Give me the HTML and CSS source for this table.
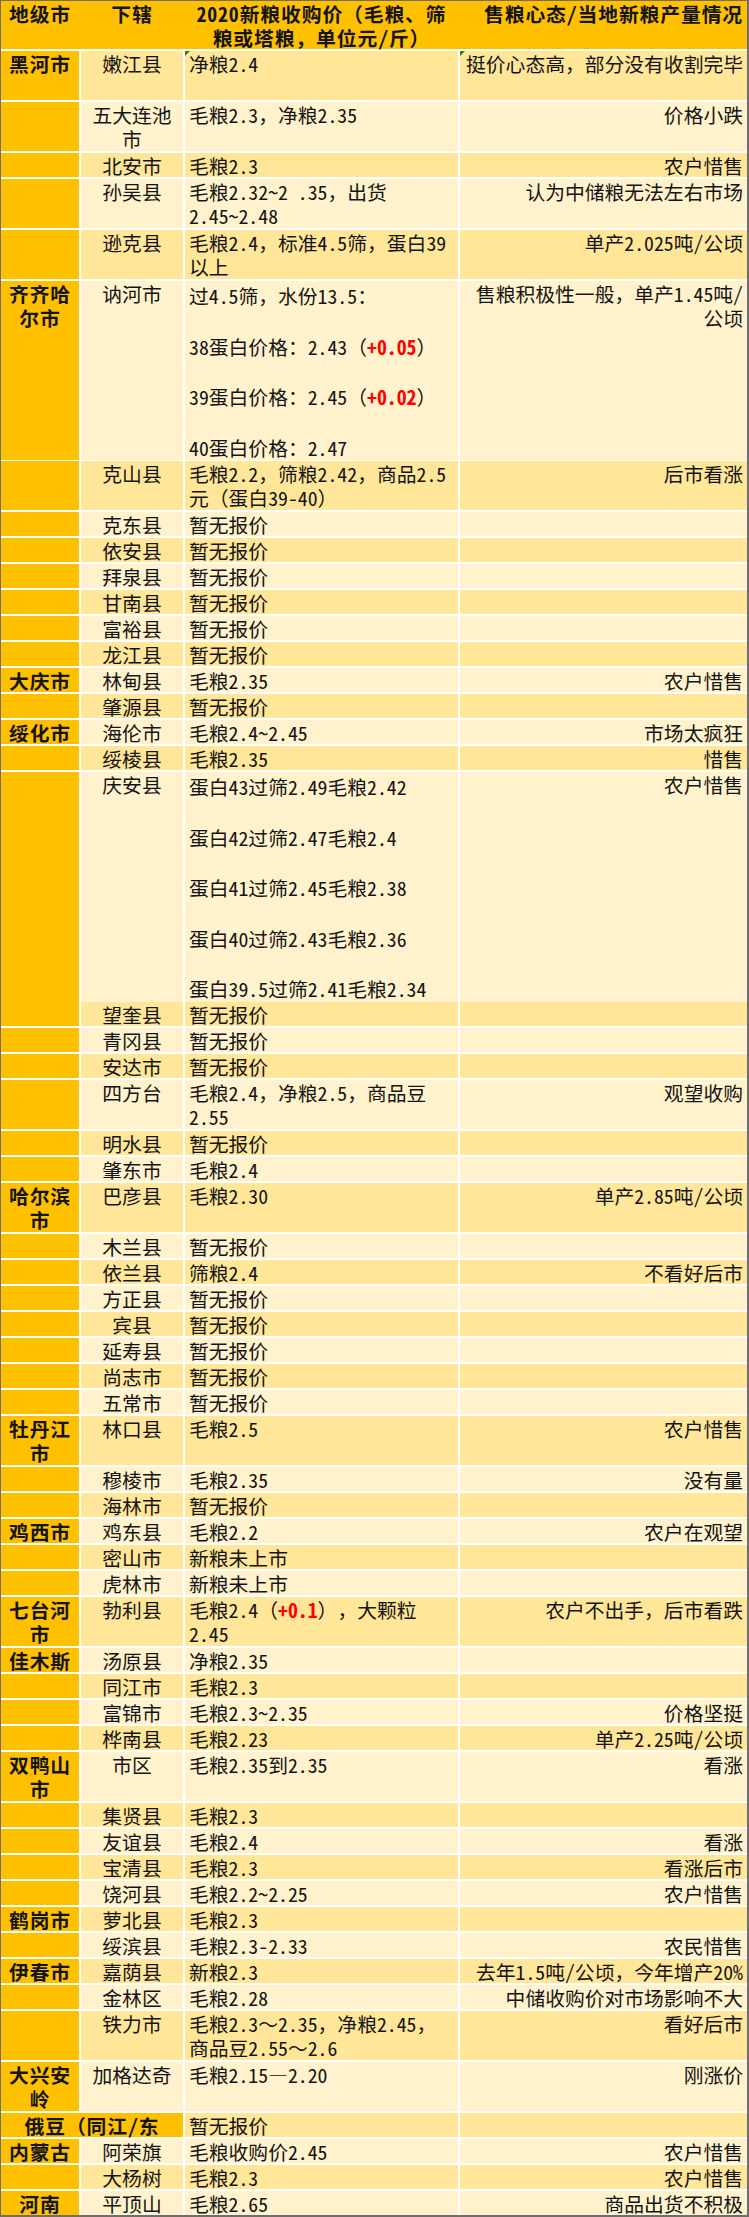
FILE: index.html
```html
<!DOCTYPE html>
<html lang="zh-CN">
<head>
<meta charset="utf-8">
<title>2020新粮收购价</title>
<link rel="stylesheet" href="styles.css">
</head>
<body>
<div class="sheet">
  <div class="row head">
    <div class="c1">地级市</div><div class="c2">下辖</div><div class="c3">2020新粮收购价（毛粮、筛粮或塔粮，单位元/斤）</div><div class="c4">售粮心态/当地新粮产量情况</div>
  </div>
  <div class="row dark h2"><div class="c1">黑河市</div><div class="c2">嫩江县</div><div class="c3 flag">净粮2.4</div><div class="c4 flag">挺价心态高，部分没有收割完毕</div></div>
  <div class="row light h2"><div class="c1"></div><div class="c2">五大连池市</div><div class="c3">毛粮2.3，净粮2.35</div><div class="c4">价格小跌</div></div>
  <div class="row dark h1"><div class="c1"></div><div class="c2">北安市</div><div class="c3">毛粮2.3</div><div class="c4">农户惜售</div></div>
  <div class="row light h2"><div class="c1"></div><div class="c2">孙吴县</div><div class="c3">毛粮2.32~2 .35，出货2.45~2.48</div><div class="c4">认为中储粮无法左右市场</div></div>
  <div class="row dark h2"><div class="c1"></div><div class="c2">逊克县</div><div class="c3">毛粮2.4，标准4.5筛，蛋白39以上</div><div class="c4">单产2.025吨/公顷</div></div>
  <div class="row light h7"><div class="c1">齐齐哈尔市</div><div class="c2">讷河市</div><div class="c3 tall">过4.5筛，水份13.5：<br><br>38蛋白价格：2.43（<b class="red">+0.05</b>）<br><br>39蛋白价格：2.45（<b class="red">+0.02</b>）<br><br>40蛋白价格：2.47</div><div class="c4">售粮积极性一般，单产1.45吨/公顷</div></div>
  <div class="row dark h2"><div class="c1"></div><div class="c2">克山县</div><div class="c3">毛粮2.2，筛粮2.42，商品2.5元（蛋白39-40）</div><div class="c4">后市看涨</div></div>
  <div class="row light h1"><div class="c1"></div><div class="c2">克东县</div><div class="c3">暂无报价</div><div class="c4"></div></div>
  <div class="row dark h1"><div class="c1"></div><div class="c2">依安县</div><div class="c3">暂无报价</div><div class="c4"></div></div>
  <div class="row light h1"><div class="c1"></div><div class="c2">拜泉县</div><div class="c3">暂无报价</div><div class="c4"></div></div>
  <div class="row dark h1"><div class="c1"></div><div class="c2">甘南县</div><div class="c3">暂无报价</div><div class="c4"></div></div>
  <div class="row light h1"><div class="c1"></div><div class="c2">富裕县</div><div class="c3">暂无报价</div><div class="c4"></div></div>
  <div class="row dark h1"><div class="c1"></div><div class="c2">龙江县</div><div class="c3">暂无报价</div><div class="c4"></div></div>
  <div class="row light h1"><div class="c1">大庆市</div><div class="c2">林甸县</div><div class="c3">毛粮2.35</div><div class="c4">农户惜售</div></div>
  <div class="row dark h1"><div class="c1"></div><div class="c2">肇源县</div><div class="c3">暂无报价</div><div class="c4"></div></div>
  <div class="row light h1"><div class="c1">绥化市</div><div class="c2">海伦市</div><div class="c3">毛粮2.4~2.45</div><div class="c4">市场太疯狂</div></div>
  <div class="row dark h1"><div class="c1"></div><div class="c2">绥棱县</div><div class="c3">毛粮2.35</div><div class="c4">惜售</div></div>
  <div class="row light h9"><div class="c1"></div><div class="c2">庆安县</div><div class="c3 tall">蛋白43过筛2.49毛粮2.42<br><br>蛋白42过筛2.47毛粮2.4<br><br>蛋白41过筛2.45毛粮2.38<br><br>蛋白40过筛2.43毛粮2.36<br><br>蛋白39.5过筛2.41毛粮2.34</div><div class="c4">农户惜售</div></div>
  <div class="row dark h1"><div class="c1"></div><div class="c2">望奎县</div><div class="c3">暂无报价</div><div class="c4"></div></div>
  <div class="row light h1"><div class="c1"></div><div class="c2">青冈县</div><div class="c3">暂无报价</div><div class="c4"></div></div>
  <div class="row dark h1"><div class="c1"></div><div class="c2">安达市</div><div class="c3">暂无报价</div><div class="c4"></div></div>
  <div class="row light h2"><div class="c1"></div><div class="c2">四方台</div><div class="c3">毛粮2.4，净粮2.5，商品豆2.55</div><div class="c4">观望收购</div></div>
  <div class="row dark h1"><div class="c1"></div><div class="c2">明水县</div><div class="c3">暂无报价</div><div class="c4"></div></div>
  <div class="row light h1"><div class="c1"></div><div class="c2">肇东市</div><div class="c3">毛粮2.4</div><div class="c4"></div></div>
  <div class="row dark h2"><div class="c1">哈尔滨市</div><div class="c2">巴彦县</div><div class="c3">毛粮2.30</div><div class="c4">单产2.85吨/公顷</div></div>
  <div class="row light h1"><div class="c1"></div><div class="c2">木兰县</div><div class="c3">暂无报价</div><div class="c4"></div></div>
  <div class="row dark h1"><div class="c1"></div><div class="c2">依兰县</div><div class="c3">筛粮2.4</div><div class="c4">不看好后市</div></div>
  <div class="row light h1"><div class="c1"></div><div class="c2">方正县</div><div class="c3">暂无报价</div><div class="c4"></div></div>
  <div class="row dark h1"><div class="c1"></div><div class="c2">宾县</div><div class="c3">暂无报价</div><div class="c4"></div></div>
  <div class="row light h1"><div class="c1"></div><div class="c2">延寿县</div><div class="c3">暂无报价</div><div class="c4"></div></div>
  <div class="row dark h1"><div class="c1"></div><div class="c2">尚志市</div><div class="c3">暂无报价</div><div class="c4"></div></div>
  <div class="row light h1"><div class="c1"></div><div class="c2">五常市</div><div class="c3">暂无报价</div><div class="c4"></div></div>
  <div class="row dark h2"><div class="c1">牡丹江市</div><div class="c2">林口县</div><div class="c3">毛粮2.5</div><div class="c4">农户惜售</div></div>
  <div class="row light h1"><div class="c1"></div><div class="c2">穆棱市</div><div class="c3">毛粮2.35</div><div class="c4">没有量</div></div>
  <div class="row dark h1"><div class="c1"></div><div class="c2">海林市</div><div class="c3">暂无报价</div><div class="c4"></div></div>
  <div class="row light h1"><div class="c1">鸡西市</div><div class="c2">鸡东县</div><div class="c3">毛粮2.2</div><div class="c4">农户在观望</div></div>
  <div class="row dark h1"><div class="c1"></div><div class="c2">密山市</div><div class="c3">新粮未上市</div><div class="c4"></div></div>
  <div class="row light h1"><div class="c1"></div><div class="c2">虎林市</div><div class="c3">新粮未上市</div><div class="c4"></div></div>
  <div class="row dark h2"><div class="c1">七台河市</div><div class="c2">勃利县</div><div class="c3">毛粮2.4（<b class="red">+0.1</b>），大颗粒2.45</div><div class="c4">农户不出手，后市看跌</div></div>
  <div class="row light h1"><div class="c1">佳木斯</div><div class="c2">汤原县</div><div class="c3">净粮2.35</div><div class="c4"></div></div>
  <div class="row dark h1"><div class="c1"></div><div class="c2">同江市</div><div class="c3">毛粮2.3</div><div class="c4"></div></div>
  <div class="row light h1"><div class="c1"></div><div class="c2">富锦市</div><div class="c3">毛粮2.3~2.35</div><div class="c4">价格坚挺</div></div>
  <div class="row dark h1"><div class="c1"></div><div class="c2">桦南县</div><div class="c3">毛粮2.23</div><div class="c4">单产2.25吨/公顷</div></div>
  <div class="row light h2"><div class="c1">双鸭山市</div><div class="c2">市区</div><div class="c3">毛粮2.35到2.35</div><div class="c4">看涨</div></div>
  <div class="row dark h1"><div class="c1"></div><div class="c2">集贤县</div><div class="c3">毛粮2.3</div><div class="c4"></div></div>
  <div class="row light h1"><div class="c1"></div><div class="c2">友谊县</div><div class="c3">毛粮2.4</div><div class="c4">看涨</div></div>
  <div class="row dark h1"><div class="c1"></div><div class="c2">宝清县</div><div class="c3">毛粮2.3</div><div class="c4">看涨后市</div></div>
  <div class="row light h1"><div class="c1"></div><div class="c2">饶河县</div><div class="c3">毛粮2.2~2.25</div><div class="c4">农户惜售</div></div>
  <div class="row dark h1"><div class="c1">鹤岗市</div><div class="c2">萝北县</div><div class="c3">毛粮2.3</div><div class="c4"></div></div>
  <div class="row light h1"><div class="c1"></div><div class="c2">绥滨县</div><div class="c3">毛粮2.3-2.33</div><div class="c4">农民惜售</div></div>
  <div class="row dark h1"><div class="c1">伊春市</div><div class="c2">嘉荫县</div><div class="c3">新粮2.3</div><div class="c4">去年1.5吨/公顷，今年增产20%</div></div>
  <div class="row light h1"><div class="c1"></div><div class="c2">金林区</div><div class="c3">毛粮2.28</div><div class="c4">中储收购价对市场影响不大</div></div>
  <div class="row dark h2"><div class="c1"></div><div class="c2">铁力市</div><div class="c3">毛粮2.3～2.35，净粮2.45，商品豆2.55～2.6</div><div class="c4">看好后市</div></div>
  <div class="row light h2"><div class="c1">大兴安岭</div><div class="c2">加格达奇</div><div class="c3">毛粮2.15—2.20</div><div class="c4">刚涨价</div></div>
  <div class="row dark h1"><div class="c1 span2">俄豆（同江/东</div><div class="c3">暂无报价</div><div class="c4"></div></div>
  <div class="row light h1"><div class="c1">内蒙古</div><div class="c2">阿荣旗</div><div class="c3">毛粮收购价2.45</div><div class="c4">农户惜售</div></div>
  <div class="row dark h1"><div class="c1"></div><div class="c2">大杨树</div><div class="c3">毛粮2.3</div><div class="c4">农户惜售</div></div>
  <div class="row light h1"><div class="c1">河南</div><div class="c2">平顶山</div><div class="c3">毛粮2.65</div><div class="c4">商品出货不积极</div></div>
</div>
</body>
</html>
```

FILE: styles.css
```css
* { box-sizing: border-box; }
html, body { margin: 0; padding: 0; }
body {
  background: #6e6e6e;
  font-family: "Noto Sans Mono CJK SC", "Noto Sans CJK SC", sans-serif;
  font-size: 19.8px;
  color: #141414;
  text-spacing-trim: space-all;
}
.sheet {
  width: 746px;
  margin: 1px 0 0 1px;
  background: #ffffff;
  display: flex;
  flex-direction: column;
  gap: 2px;
}
.row {
  display: grid;
  grid-template-columns: 78px 102px 273px 287px;
  column-gap: 2px;
  line-height: 24px;
}
.row > div {
  padding: 1px 4px 0 4px;
  overflow: visible;
  min-width: 0;
}
.head {
  height: 48px;
  background: #ffc000;
  font-weight: 700;
  line-height: 24px;
  letter-spacing: 0.9px;
}
.head > div { background: transparent; }
.c1 { background: #ffc000; text-align: center; font-weight: 700; letter-spacing: 0.9px; }
.c2 { text-align: center; }
.c3 { text-align: left; }
.row > .c4 { text-align: right; padding-left: 1px; padding-right: 4px; }
.head .c3 { text-align: center; }
.span2 { grid-column: span 2; }
.dark .c2, .dark .c3, .dark .c4 { background: #ffe699; }
.light .c2, .light .c3, .light .c4 { background: #fff2cc; }
.h1 { height: 24px; line-height: 23px; }
.h2 { height: 49px; }
.h7 { height: 178px; }
.h9 { height: 228px; }
.row > .tall { line-height: 25.3px; padding-top: 2px; }
.red { color: #ff0000; font-weight: 700; }
.flag { position: relative; }
.flag::before {
  content: "";
  position: absolute;
  left: 0;
  top: 0;
  border-top: 5px solid #2f7d1f;
  border-right: 5px solid transparent;
}
```
